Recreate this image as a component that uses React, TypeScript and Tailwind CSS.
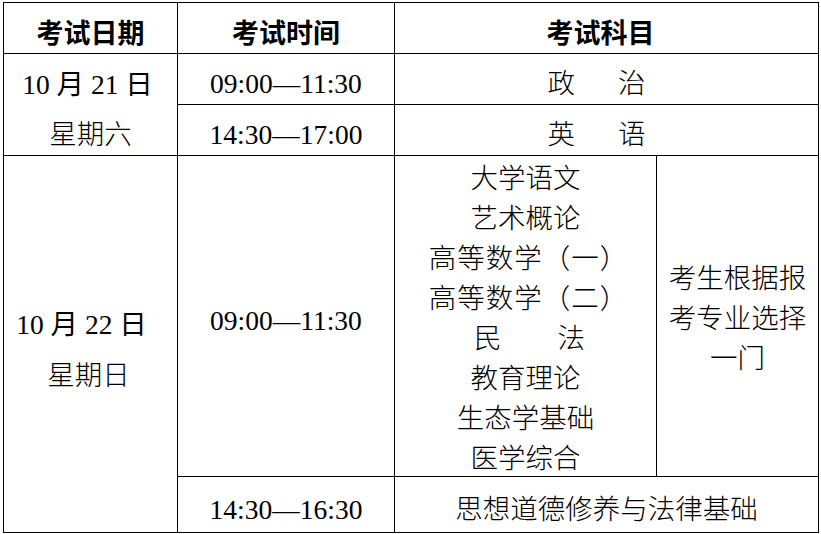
import React from "react";

const serif = { fontFamily: '"Liberation Serif", "Noto Sans CJK SC", serif' };
const sans = { fontFamily: '"Noto Sans CJK SC", "Noto Sans", sans-serif' };

function Cell({ className = "", children }: { className?: string; children?: React.ReactNode }) {
  return <div className={`bg-white flex items-center justify-center ${className}`}>{children}</div>;
}

export default function App() {
  const subjects = [
    "大学语文",
    "艺术概论",
    "高等数学（一）",
    "高等数学（二）",
    null,
    "教育理论",
    "生态学基础",
    "医学综合",
  ];
  return (
    <div className="w-[821px] h-[534px] bg-white pl-[3px] pt-[2px]">
      <div
        className="grid w-[816px] h-[531px] bg-black p-px gap-px grid-cols-[173px_216px_261px_161px] grid-rows-[50px_50px_50px_320px_55px] text-black text-[27.5px]"
        style={serif}
      >
        {/* header */}
        <Cell className="pt-[8px] font-bold text-[27px]">
          <span style={sans}>考试日期</span>
        </Cell>
        <Cell className="pt-[8px] font-bold text-[27px]">
          <span style={sans}>考试时间</span>
        </Cell>
        <Cell className="col-span-2 pt-[8px] font-bold text-[27px]">
          <span className="mr-[12px]" style={sans}>考试科目</span>
        </Cell>

        {/* day 1 */}
        <Cell className="row-span-2 flex-col pt-[10px] leading-[50px]">
          <div className="whitespace-pre mr-[6px]">10 月 21 日</div>
          <div className="font-light">星期六</div>
        </Cell>
        <Cell className="pt-[10px]">09:00—11:30</Cell>
        <Cell className="col-span-2 pt-[10px] font-light">
          <div className="flex gap-[43px] mr-[20px]">
            <span>政</span>
            <span>治</span>
          </div>
        </Cell>
        <Cell className="pt-[10px]">14:30—17:00</Cell>
        <Cell className="col-span-2 pt-[10px] font-light">
          <div className="flex gap-[43px] mr-[20px]">
            <span>英</span>
            <span>语</span>
          </div>
        </Cell>

        {/* day 2 */}
        <Cell className="row-span-2 flex-col pt-[12px] leading-[51px]">
          <div className="whitespace-pre mr-[18px]">10 月 22 日</div>
          <div className="font-light mr-[4px]">星期日</div>
        </Cell>
        <Cell className="pt-[10px]">09:00—11:30</Cell>
        <div className="bg-white flex flex-col items-center justify-start pt-[3px] overflow-hidden leading-[40px] font-light">
          {subjects.map((s, i) =>
            s === null ? (
              <div key={i} className="flex gap-[56px] ml-[8px]">
                <span>民</span>
                <span>法</span>
              </div>
            ) : (
              <div key={i} className={i === 2 || i === 3 ? "ml-[6px] tracking-[1px]" : ""}>
                {s}
              </div>
            )
          )}
        </div>
        <Cell className="pt-[5px] font-light">
          <div className="text-center leading-[40px] w-[140px]">考生根据报考专业选择一门</div>
        </Cell>
        <Cell className="pt-[10px]">14:30—16:30</Cell>
        <Cell className="col-span-2 pt-[10px] font-light">思想道德修养与法律基础</Cell>
      </div>
    </div>
  );
}
